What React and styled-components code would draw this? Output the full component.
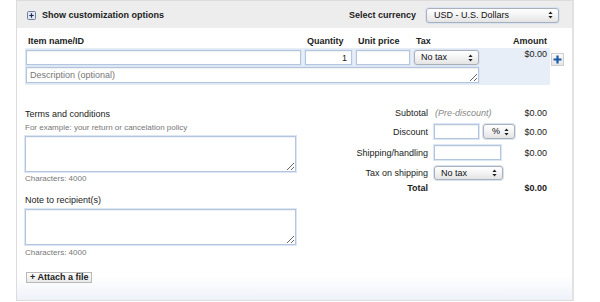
import React from "react";
import styled, { createGlobalStyle } from "styled-components";

const GlobalStyle = createGlobalStyle`
  html, body {
    margin: 0;
    padding: 0;
    background: #fff;
    font-family: "Liberation Sans", Arial, sans-serif;
    font-size: 9px;
    color: #222;
  }
`;

const Page = styled.div`
  padding-left: 16px;
  width: 600px;
  height: 302px;
  box-sizing: border-box;
`;

const Panel = styled.div`
  width: 558px;
  box-sizing: border-box;
  border: 1px solid #dcdcdc;
  border-right: 2px solid #e2e2e2;
  background: linear-gradient(to bottom, #fff 0%, #fff 92%, #eef2f9 100%);
  padding-bottom: 17px;
`;

const Header = styled.div`
  display: flex;
  align-items: center;
  height: 26px;
  padding: 1px 13px 0 10px;
  background: #ededed;
`;

const ToggleLabel = styled.span`
  display: flex;
  align-items: center;
  gap: 6px;
  font-weight: bold;
  color: #222;
`;

const CurrencyLabel = styled.span`
  margin-left: auto;
  margin-right: 10px;
  font-weight: bold;
  color: #222;
`;

const Content = styled.div`
  padding: 0 0 0 8px;
`;

const cols = "275px 47px 54px 65px 1fr";

const ItemHead = styled.div`
  display: grid;
  grid-template-columns: ${cols};
  column-gap: 4px;
  width: 525px;
  box-sizing: border-box;
  padding: 0 3px 0 1px;
  margin-top: 8px;
  line-height: 11px;
  font-weight: bold;
  color: #222;
`;

const HeadCell = styled.span`
  text-align: ${(p) => (p.$right ? "right" : "left")};
  padding-left: ${(p) => (p.$right ? "0" : "2px")};
`;

const ItemWrap = styled.div`
  display: flex;
  align-items: flex-start;
  margin-top: 1px;
`;

const ItemRow = styled.div`
  display: grid;
  grid-template-columns: ${cols};
  column-gap: 4px;
  row-gap: 2px;
  width: 525px;
  box-sizing: border-box;
  padding: 2px 3px 2px 1px;
  background: #e8eef8;
`;

const Field = styled.input`
  box-sizing: border-box;
  width: ${(p) => p.$w || "100%"};
  height: ${(p) => p.$h || 15}px;
  border: 1px solid #b4c6df;
  box-shadow: inset 0 1px 1px rgba(0, 0, 0, 0.06), 0 0 0 1px #dde7f4;
  background: #fff;
  font: 9px "Liberation Sans", Arial, sans-serif;
  color: #222;
  padding: 0 4px;
  text-align: ${(p) => (p.$right ? "right" : "left")};
  outline: none;
  &::placeholder {
    color: #777;
  }
`;

const Area = styled.textarea`
  box-sizing: border-box;
  display: block;
  width: ${(p) => p.$w || "100%"};
  height: ${(p) => p.$h}px;
  grid-column: ${(p) => p.$span || "auto"};
  border: 1px solid #b4c6df;
  box-shadow: inset 0 1px 1px rgba(0, 0, 0, 0.06), 0 0 0 1px #dde7f4;
  font: 9px "Liberation Sans", Arial, sans-serif;
  color: #222;
  padding: 2px 3px;
  margin: ${(p) => p.$mt || 0}px 0 0 0;
  outline: none;
  &::placeholder {
    color: #777;
  }
`;

const SelectBox = styled.div`
  box-sizing: border-box;
  display: flex;
  align-items: center;
  justify-content: space-between;
  width: ${(p) => p.$w}px;
  height: ${(p) => p.$h || 15}px;
  padding: 0 5px 0 ${(p) => p.$pl || 6}px;
  border: 1px solid #a9b0ba;
  border-radius: 3px;
  background: linear-gradient(to bottom, #ffffff 0%, #f3f3f3 50%, #e4e4e4 100%);
  box-shadow: 0 0 0 1px #d9e4f2;
  color: #111;
  font-size: 9px;
  line-height: 1;
`;

const Amount = styled.span`
  text-align: right;
  line-height: 8px;
  color: #222;
`;

const AddButton = styled.button`
  box-sizing: border-box;
  width: 13px;
  height: 13px;
  margin: 5px 0 0 1px;
  padding: 0;
  border: 1px solid #cfcfcf;
  background: linear-gradient(to bottom, #fafafa, #e6e6e6);
  display: flex;
  align-items: center;
  justify-content: center;
`;

const Lower = styled.div`
  display: flex;
  justify-content: space-between;
  margin-top: 21px;
  padding-right: 25px;
`;

const LeftCol = styled.div`
  width: 271px;
  display: flex;
  flex-direction: column;
`;

const Label = styled.div`
  margin-top: ${(p) => p.$mt || 0}px;
  line-height: 12px;
  color: #222;
`;

const Hint = styled.div`
  margin-top: ${(p) => p.$mt || 0}px;
  margin-bottom: ${(p) => p.$mb || 0}px;
  line-height: 10px;
  font-size: 8px;
  color: #777;
`;

const AttachButton = styled.button`
  align-self: flex-start;
  margin: 14px 0 0 1px;
  height: 11px;
  padding: 0 3px;
  border: 1px solid #b9b9b9;
  background: linear-gradient(to bottom, #fdfdfd, #e9e9e9);
  font: bold 9px "Liberation Sans", Arial, sans-serif;
  line-height: 9px;
  color: #222;
`;

const Summary = styled.div`
  display: flex;
  flex-direction: column;
`;

const SumRow = styled.div`
  display: grid;
  grid-template-columns: 90px 81px 26px;
  column-gap: 6px;
  align-items: center;
  height: ${(p) => p.$h}px;
  margin-top: ${(p) => p.$mt || 0}px;
  font-weight: ${(p) => (p.$bold ? "bold" : "normal")};
`;

const SumLabel = styled.span`
  text-align: right;
  color: #222;
`;

const Controls = styled.div`
  display: flex;
  gap: 4px;
  align-items: center;
`;

const Note = styled.span`
  font-style: italic;
  color: #888;
  padding-left: 1px;
`;

const Value = styled.span`
  text-align: right;
  color: #222;
`;

const Arrows = () => (
  <svg width="5" height="8" viewBox="0 0 5 8">
    <path d="M2.5 0.5 L4.6 3 L0.4 3 Z M2.5 7.5 L4.6 5 L0.4 5 Z" fill="#222" />
  </svg>
);

const ToggleIcon = () => (
  <svg width="9" height="9" viewBox="0 0 9 9">
    <rect x="0.5" y="0.5" width="8" height="8" rx="1" fill="#dfe8f4" stroke="#6e7f99" />
    <path d="M4.5 2.3 V6.7 M2.3 4.5 H6.7" stroke="#1f2f4a" strokeWidth="1.2" />
  </svg>
);

const PlusIcon = () => (
  <svg width="9" height="9" viewBox="0 0 9 9">
    <path d="M4.5 0.5 V8.5 M0.5 4.5 H8.5" stroke="#1b5aa6" strokeWidth="2.2" />
  </svg>
);

const Select = ({ w, h, pl, children }) => (
  <SelectBox $w={w} $h={h} $pl={pl}>
    <span>{children}</span>
    <Arrows />
  </SelectBox>
);

export default function App() {
  return (
    <>
      <GlobalStyle />
      <Page>
        <Panel>
          <Header>
            <ToggleLabel>
              <ToggleIcon />
              Show customization options
            </ToggleLabel>
            <CurrencyLabel>Select currency</CurrencyLabel>
            <Select w={133} pl={7}>USD - U.S. Dollars</Select>
          </Header>

          <Content>
            <ItemHead>
              <HeadCell>Item name/ID</HeadCell>
              <HeadCell>Quantity</HeadCell>
              <HeadCell>Unit price</HeadCell>
              <HeadCell>Tax</HeadCell>
              <HeadCell $right>Amount</HeadCell>
            </ItemHead>

            <ItemWrap>
              <ItemRow>
                <Field />
                <Field $right defaultValue="1" />
                <Field />
                <Select w={65}>No tax</Select>
                <Amount>$0.00</Amount>
                <Area $span="1 / 5" $h={16} placeholder="Description (optional)" />
              </ItemRow>
              <AddButton aria-label="Add item">
                <PlusIcon />
              </AddButton>
            </ItemWrap>

            <Lower>
              <LeftCol>
                <Label $mt={2}>Terms and conditions</Label>
                <Hint $mt={3} $mb={3}>For example: your return or cancelation policy</Hint>
                <Area $w="271px" $h={36} />
                <Hint $mt={2}>Characters: 4000</Hint>
                <Label $mt={10}>Note to recipient(s)</Label>
                <Area $w="271px" $h={36} $mt={3} />
                <Hint $mt={3}>Characters: 4000</Hint>
                <AttachButton>+ Attach a file</AttachButton>
              </LeftCol>

              <Summary>
                <SumRow $h={14}>
                  <SumLabel>Subtotal</SumLabel>
                  <Note>(Pre-discount)</Note>
                  <Value>$0.00</Value>
                </SumRow>
                <SumRow $h={15} $mt={4}>
                  <SumLabel>Discount</SumLabel>
                  <Controls>
                    <Field $w="45px" />
                    <Select w={32} pl={8}>%</Select>
                  </Controls>
                  <Value>$0.00</Value>
                </SumRow>
                <SumRow $h={15} $mt={6}>
                  <SumLabel>Shipping/handling</SumLabel>
                  <Controls>
                    <Field $w="67px" />
                  </Controls>
                  <Value>$0.00</Value>
                </SumRow>
                <SumRow $h={14} $mt={6}>
                  <SumLabel>Tax on shipping</SumLabel>
                  <Controls>
                    <Select w={69} h={14}>No tax</Select>
                  </Controls>
                  <Value />
                </SumRow>
                <SumRow $h={14} $mt={1} $bold>
                  <SumLabel>Total</SumLabel>
                  <span />
                  <Value>$0.00</Value>
                </SumRow>
              </Summary>
            </Lower>
          </Content>
        </Panel>
      </Page>
    </>
  );
}
